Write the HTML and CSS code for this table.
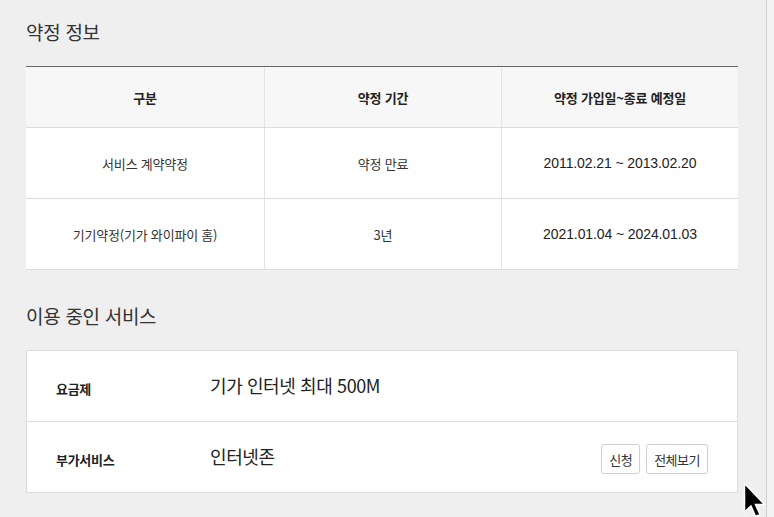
FILE: index.html
```html
<!DOCTYPE html>
<html lang="ko">
<head>
<meta charset="utf-8">
<link rel="stylesheet" href="styles.css">
</head>
<body>
<div class="page">
  <h2 class="sec-title first">약정 정보</h2>
  <div class="contract">
    <div class="row head">
      <div class="cell">구분</div>
      <div class="cell">약정 기간</div>
      <div class="cell">약정 가입일~종료 예정일</div>
    </div>
    <div class="row">
      <div class="cell">서비스 계약약정</div>
      <div class="cell">약정 만료</div>
      <div class="cell num">2011.02.21 ~ 2013.02.20</div>
    </div>
    <div class="row">
      <div class="cell">기기약정(기가 와이파이 홈)</div>
      <div class="cell">3년</div>
      <div class="cell num">2021.01.04 ~ 2024.01.03</div>
    </div>
  </div>

  <h2 class="sec-title">이용 중인 서비스</h2>
  <div class="service">
    <div class="srow">
      <div class="label">요금제</div>
      <div class="value">기가 인터넷 최대 500M</div>
    </div>
    <div class="srow">
      <div class="label">부가서비스</div>
      <div class="value">인터넷존</div>
      <div class="btns">
        <button class="btn">신청</button>
        <button class="btn">전체보기</button>
      </div>
    </div>
  </div>
</div>
<svg class="cursor" width="26" height="36" viewBox="0 0 26 36">
  <path d="M1.5 1.5 L1.5 30 L8 24 L12.5 34.5 L17 32.5 L12.5 22.5 L21.5 22.5 Z" fill="#000" stroke="#fff" stroke-width="1.5" stroke-linejoin="miter"/>
</svg>
</body>
</html>
```
FILE: styles.css
```css
html, body {
  margin: 0;
  padding: 0;
  height: 100%;
  overflow: hidden;
}
body {
  background: #f4f4f4;
  font-family: "Noto Sans CJK KR", "Noto Sans", "Liberation Sans", sans-serif;
  color: #333;
  position: relative;
}
.page {
  width: 740px;
  height: 100%;
  padding-left: 26px;
  box-sizing: content-box;
  background: #efefef;
  border-right: 1px solid #cfcfcf;
}
.sec-title {
  margin: 32px 0 20px;
  font-size: 19px;
  line-height: 28px;
  font-weight: 400;
  color: #333;
  letter-spacing: -0.3px;
}
.sec-title.first {
  margin-top: 0;
  padding-top: 18px;
}
.contract {
  width: 712px;
  border-top: 1px solid #666;
  background: #fff;
}
.row {
  display: grid;
  grid-template-columns: 238px 237px 237px;
  height: 70px;
  border-bottom: 1px solid #dcdcdc;
}
.row.head {
  height: 60px;
  background: #f7f7f7;
}
.cell {
  display: flex;
  align-items: center;
  justify-content: center;
  font-size: 13px;
  color: #333;
  letter-spacing: -0.2px;
  border-left: 1px solid #e3e3e3;
}
.cell:first-child {
  border-left: none;
}
.head .cell {
  font-weight: 700;
  color: #222;
}
.cell.num {
  font-family: "Liberation Sans", Arial, sans-serif;
  font-size: 14px;
  letter-spacing: -0.1px;
  color: #222;
}
.service {
  width: 710px;
  border: 1px solid #dcdcdc;
  background: #fff;
}
.srow {
  display: flex;
  align-items: center;
  height: 70px;
  padding: 0 29px 0 29px;
}
.srow + .srow {
  border-top: 1px solid #dcdcdc;
}
.label {
  width: 154px;
  font-size: 13px;
  font-weight: 700;
  color: #222;
  letter-spacing: -0.3px;
  padding-top: 4px;
}
.value {
  flex: 1;
  font-size: 18px;
  color: #222;
  letter-spacing: -0.4px;
  padding-bottom: 3px;
}
.btns {
  display: flex;
  gap: 6px;
  padding-top: 4px;
}
.btn {
  height: 30px;
  padding: 0 7px;
  border: 1px solid #cfcfcf;
  border-radius: 3px;
  background: #fff;
  font-family: "Noto Sans CJK KR", "Noto Sans", sans-serif;
  font-size: 13px;
  color: #333;
  letter-spacing: -0.5px;
}
.cursor {
  position: absolute;
  left: 743px;
  top: 482px;
}
```
